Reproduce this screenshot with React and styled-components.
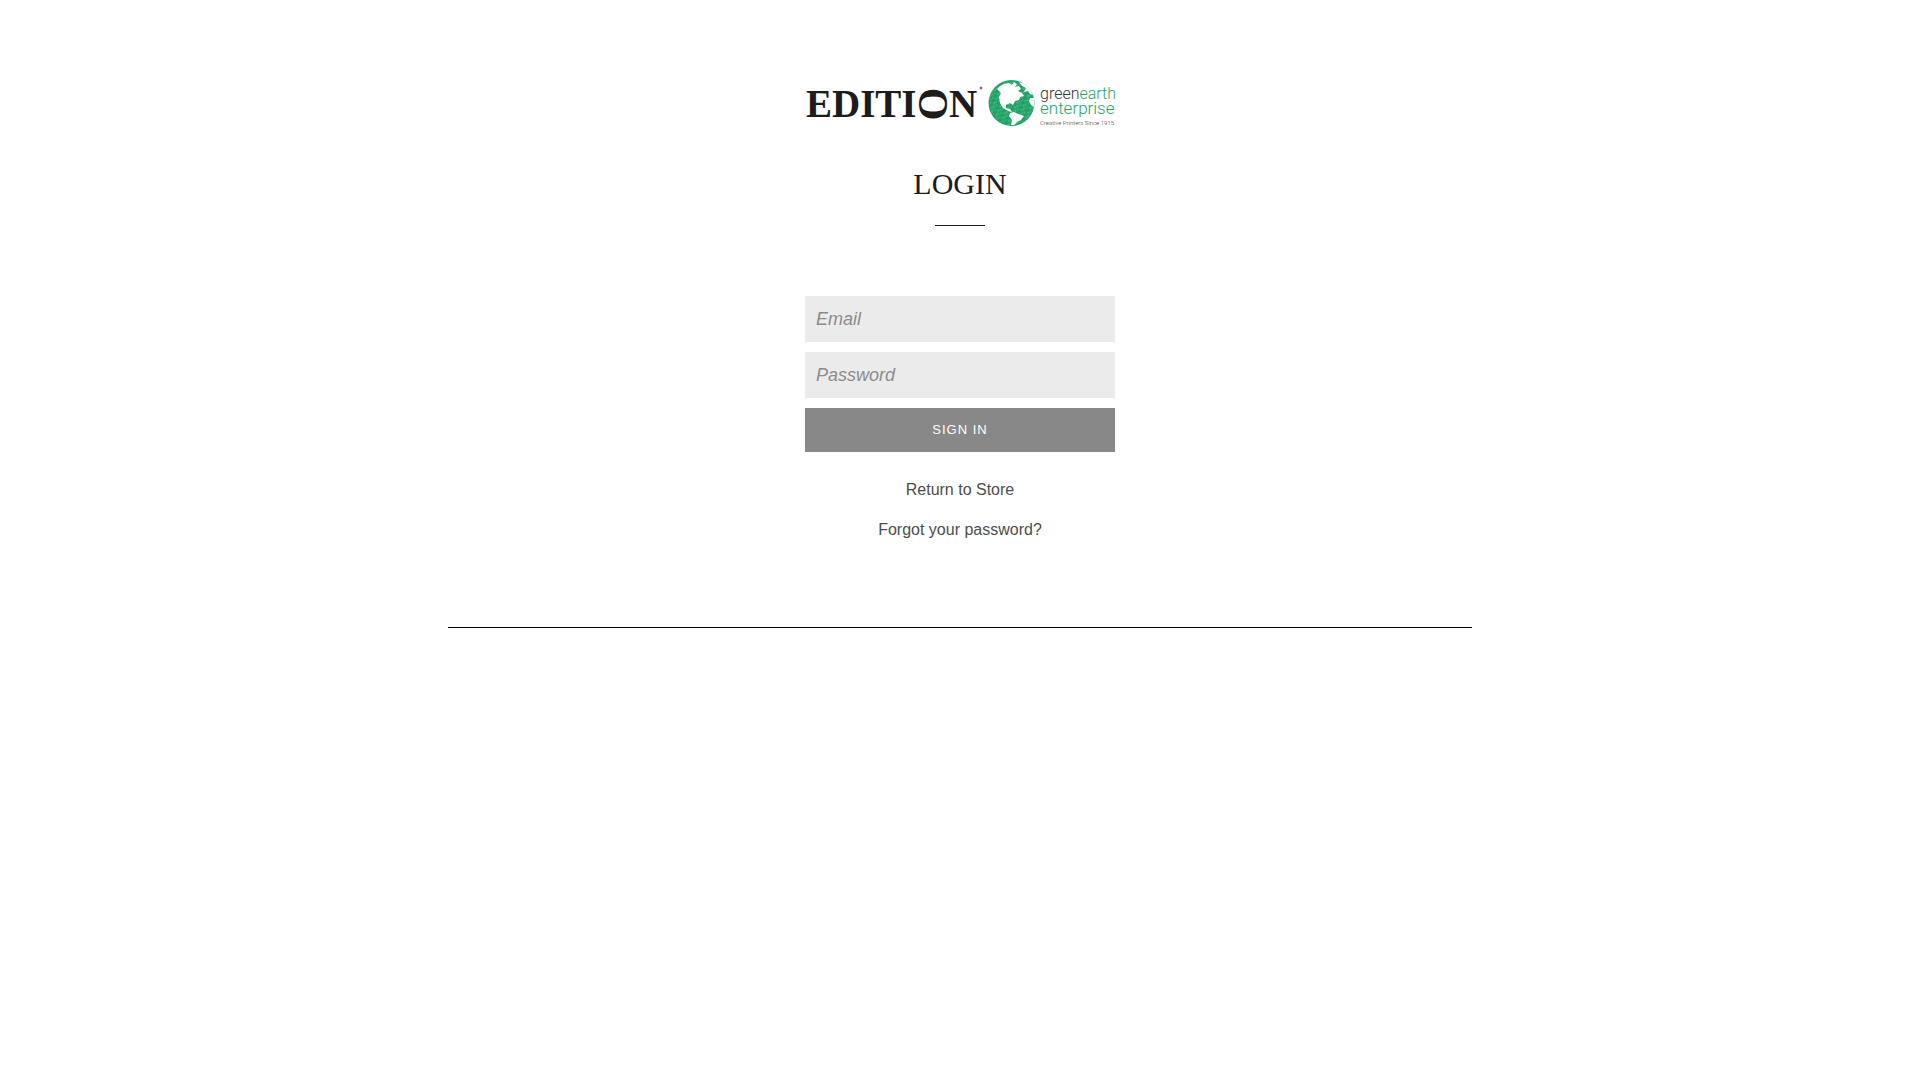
import React from "react";
import styled, { createGlobalStyle } from "styled-components";

const Logo = () => (
  <LogoSvg viewBox="0 0 310 50" role="img" aria-label="Edition, Green Earth Enterprise">
    <defs>
      <pattern id="speckle" width="7" height="5" patternUnits="userSpaceOnUse" patternTransform="rotate(24)">
        <rect width="7" height="5" fill="#24a468" />
        <circle cx="1" cy="1" r="0.7" fill="#7accA0" />
        <circle cx="4.5" cy="2" r="0.6" fill="#69c295" />
        <circle cx="2.5" cy="4" r="0.6" fill="#84d0a8" />
        <circle cx="6" cy="4" r="0.7" fill="#149257" />
      </pattern>
    </defs>

    {/* the O lies on its side */}
    <g fontFamily="Liberation Serif, serif" fontWeight="700" fill="#1c1c1c">
      <text x="1" y="39" fontSize="39">EDITI</text>
      <text x="128" y="40" fontSize="42" textAnchor="middle" transform="rotate(90 128 26)">O</text>
      <text x="144" y="39" fontSize="39">N</text>
    </g>
    <circle cx="176" cy="10" r="1.5" fill="#777" />

    {/* globe */}
    <circle cx="206.5" cy="25" r="23" fill="url(#speckle)" />
    <g fill="#fff">
      <path d="M192 11 L195 8 L199 6 L204 5 L207 7 L209 4 L212 6 L210 9 L214 8 L216 11 L213 13 L217 15 L219 18 L215 19 L214 22 L210 23 L208 27 L205 25 L201 27 L201 30 L205 31 L207 34 L203 33 L198 30 L195 25 L194 19 L196 15 Z" />
      <path d="M205 35 L209 34 L213 36 L219 38 L216 42 L212 44 L209 47 L206 47 L207 42 L204 38 Z" />
      <path d="M214 4 L220 6 L225 11 L228 17 L225 16 L223 13 L219 14 L221 10 L217 8 Z" />
      <path d="M225 20 L229 20 L229 29 L226 27 L224 23 Z" />
    </g>

    <g fontFamily="Roboto, sans-serif" fontWeight="300">
      <text x="235" y="21" fontSize="16" fill="#333">
        green<tspan fill="#27a567">earth</tspan>
      </text>
      <text x="235" y="36" fontSize="17" fill="#27a567">enterprise</text>
      <text x="235" y="47" fontSize="6" fill="#444">Creative Printers Since 1915</text>
    </g>
  </LogoSvg>
);

const App = () => {
  return (
    <Page>
      <GlobalStyle />
      <Content>
        <Logo />
        <Title>LOGIN</Title>
        <Divider />
        <Form onSubmit={(e) => e.preventDefault()}>
          <Field type="email" placeholder="Email" aria-label="Email" />
          <Field type="password" placeholder="Password" aria-label="Password" />
          <Submit type="submit">SIGN IN</Submit>
        </Form>
        <Links>
          <TextLink href="#store">Return to Store</TextLink>
          <TextLink href="#recover">Forgot your password?</TextLink>
        </Links>
      </Content>
      <FooterLine />
    </Page>
  );
};

export default App

const GlobalStyle = createGlobalStyle`
  * {
    box-sizing: border-box;
  }
  body {
    margin: 0;
    background-color: #ffffff;
    font-family: "Liberation Sans", Arial, sans-serif;
  }
`
const Page = styled.div`
  display: flex;
  flex-direction: column;
  align-items: center;
  padding: 78px 20px 40px;
`
const Content = styled.main`
  display: flex;
  flex-direction: column;
  align-items: center;
  width: 100%;
  max-width: 310px;
`
const LogoSvg = styled.svg`
  display: block;
  width: 100%;
`
const Title = styled.h1`
  margin: 40px 0 0;
  font-family: "Liberation Serif", serif;
  font-size: 30px;
  font-weight: 400;
  line-height: 32px;
  color: #1c1c1c;
`
const Divider = styled.hr`
  width: 50px;
  height: 1px;
  margin: 25px 0 70px;
  border: 0;
  background-color: #1c1c1c;
`
const Form = styled.form`
  display: flex;
  flex-direction: column;
  gap: 10px;
  width: 100%;
`
const Field = styled.input`
  width: 100%;
  height: 46px;
  padding: 0 11px;
  border: 0;
  border-radius: 0;
  background-color: #ebebeb;
  font-family: inherit;
  font-size: 18px;
  color: #333333;

  &::placeholder {
    color: #8c8c8c;
    font-style: italic;
    opacity: 1;
  }
`
const Submit = styled.button`
  height: 44px;
  padding: 0 0 2px;
  border: 0;
  background-color: #888888;
  font-family: inherit;
  font-size: 13px;
  letter-spacing: 1px;
  color: #ffffff;
  cursor: pointer;
`
const Links = styled.nav`
  display: flex;
  flex-direction: column;
  align-items: center;
  gap: 16px;
  margin-top: 26px;
`
const TextLink = styled.a`
  font-size: 16px;
  line-height: 24px;
  color: #4d4d4d;
  text-decoration: none;
`
const FooterLine = styled.hr`
  width: 100%;
  max-width: 1024px;
  height: 1px;
  margin: 85px 0 0;
  border: 0;
  background-color: #000000;
`
